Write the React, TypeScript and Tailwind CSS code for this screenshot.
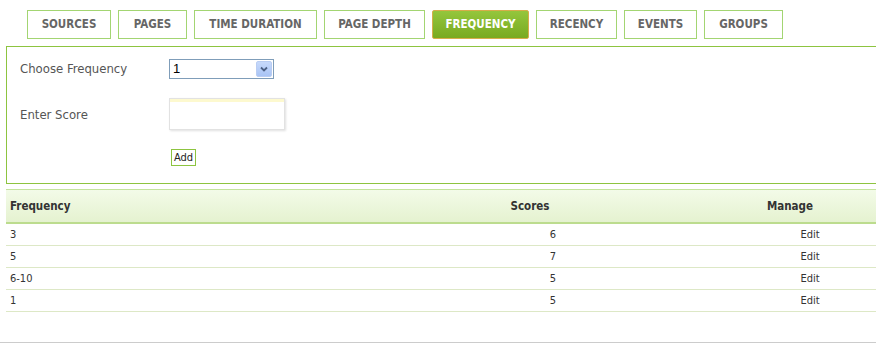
import React from "react";

const tabs = [
  { label: "SOURCES", w: "w-[84px]" },
  { label: "PAGES", w: "w-[69px]" },
  { label: "TIME DURATION", w: "w-[123px]" },
  { label: "PAGE DEPTH", w: "w-[101px]" },
  { label: "FREQUENCY", w: "w-[97px]", active: true },
  { label: "RECENCY", w: "w-[81px]" },
  { label: "EVENTS", w: "w-[73px]" },
  { label: "GROUPS", w: "w-[79px]" },
];

const rows = [
  { freq: "3", score: "6" },
  { freq: "5", score: "7" },
  { freq: "6-10", score: "5" },
  { freq: "1", score: "5" },
];

const font = "font-['DejaVu_Sans_Condensed','DejaVu_Sans',sans-serif]";

export default function App() {
  return (
    <div className={`w-[876px] h-[346px] overflow-hidden bg-white relative ${font}`}>
      {/* TABS */}
      <div className="flex gap-[7px] pt-[10px] pl-[27px]">
        {tabs.map((t) =>
          t.active ? (
            <div
              key={t.label}
              className={`${t.w} h-[29px] pt-[1px] flex items-center justify-center rounded-[2px] border border-[#d6ad4a] bg-gradient-to-b from-[#94c63c] to-[#79aa20] text-white text-[11.5px] font-bold`}
            >
              {t.label}
            </div>
          ) : (
            <div
              key={t.label}
              className={`${t.w} h-[29px] pt-[1px] flex items-center justify-center border border-[#a3d572] text-[#666] text-[11.5px] font-bold`}
            >
              {t.label}
            </div>
          )
        )}
      </div>

      {/* FORM PANEL */}
      <div className="mt-[7px] ml-[6px] w-[900px] h-[138px] border border-[#8dc440] pt-[12px] pl-[13px]">
        <div className="flex items-center h-[20px]">
          <div className="w-[149px] shrink-0 text-[13px] text-[#555]">Choose Frequency</div>
          <div className="w-[105px] h-[20px] border border-[#7f9db9] flex items-center justify-between pl-[3px] pr-[1px] bg-white">
            <span className="text-[13px] text-black font-['Liberation_Sans',sans-serif]">1</span>
            <div className="w-[16px] h-[16px] rounded-[2px] bg-gradient-to-b from-[#c7d9fb] to-[#a9c4f5] border border-[#b9cdf3] flex items-center justify-center">
              <svg width="8" height="6" viewBox="0 0 8 6">
                <path d="M1 1.5 L4 4.5 L7 1.5" stroke="#4d6185" strokeWidth="1.8" fill="none" />
              </svg>
            </div>
          </div>
        </div>

        <div className="flex items-center mt-[19px] h-[32px]">
          <div className="w-[149px] shrink-0 pt-[1px] text-[13px] text-[#555]">Enter Score</div>
          <div className="w-[116px] h-[32px] border border-[#e2e2e2] shadow-[1px_1px_2px_rgba(0,0,0,0.12)] bg-white">
            <div className="h-[3px] bg-[#fdf9cf]" />
          </div>
        </div>

        <div className="flex mt-[19px]">
          <div className="w-[151px] shrink-0" />
          <button className="h-[17px] px-[2px] border border-[#8dc440] bg-white text-[11px] text-[#222] leading-none">
            Add
          </button>
        </div>
      </div>

      {/* TABLE */}
      <div className="mt-[5px] ml-[6px] w-[940px] text-[11px] text-[#333]">
        <div className="flex items-center h-[35px] pt-[2px] border-t border-b-2 border-t-[#c4e39c] border-b-[#bcdc8e] bg-gradient-to-b from-[#f3fbe8] to-[#e5f2d0] font-bold text-[11.5px]">
          <div className="w-[414px] shrink-0 pl-[4px]">Frequency</div>
          <div className="w-[220px] shrink-0 text-center pl-[-4px]">Scores</div>
          <div className="w-[300px] shrink-0 text-center">Manage</div>
        </div>
        {rows.map((r, i) => (
          <div key={i} className="flex items-center h-[22px] pt-[2px] border-b border-[#dde8c6]">
            <div className="w-[414px] shrink-0 pl-[4px]">{r.freq}</div>
            <div className="w-[220px] shrink-0 text-center pl-[46px]">{r.score}</div>
            <div className="w-[300px] shrink-0 text-center pl-[40px]">Edit</div>
          </div>
        ))}
      </div>

      <div className="mt-[30px] h-px bg-[#cccccc]" />
    </div>
  );
}
